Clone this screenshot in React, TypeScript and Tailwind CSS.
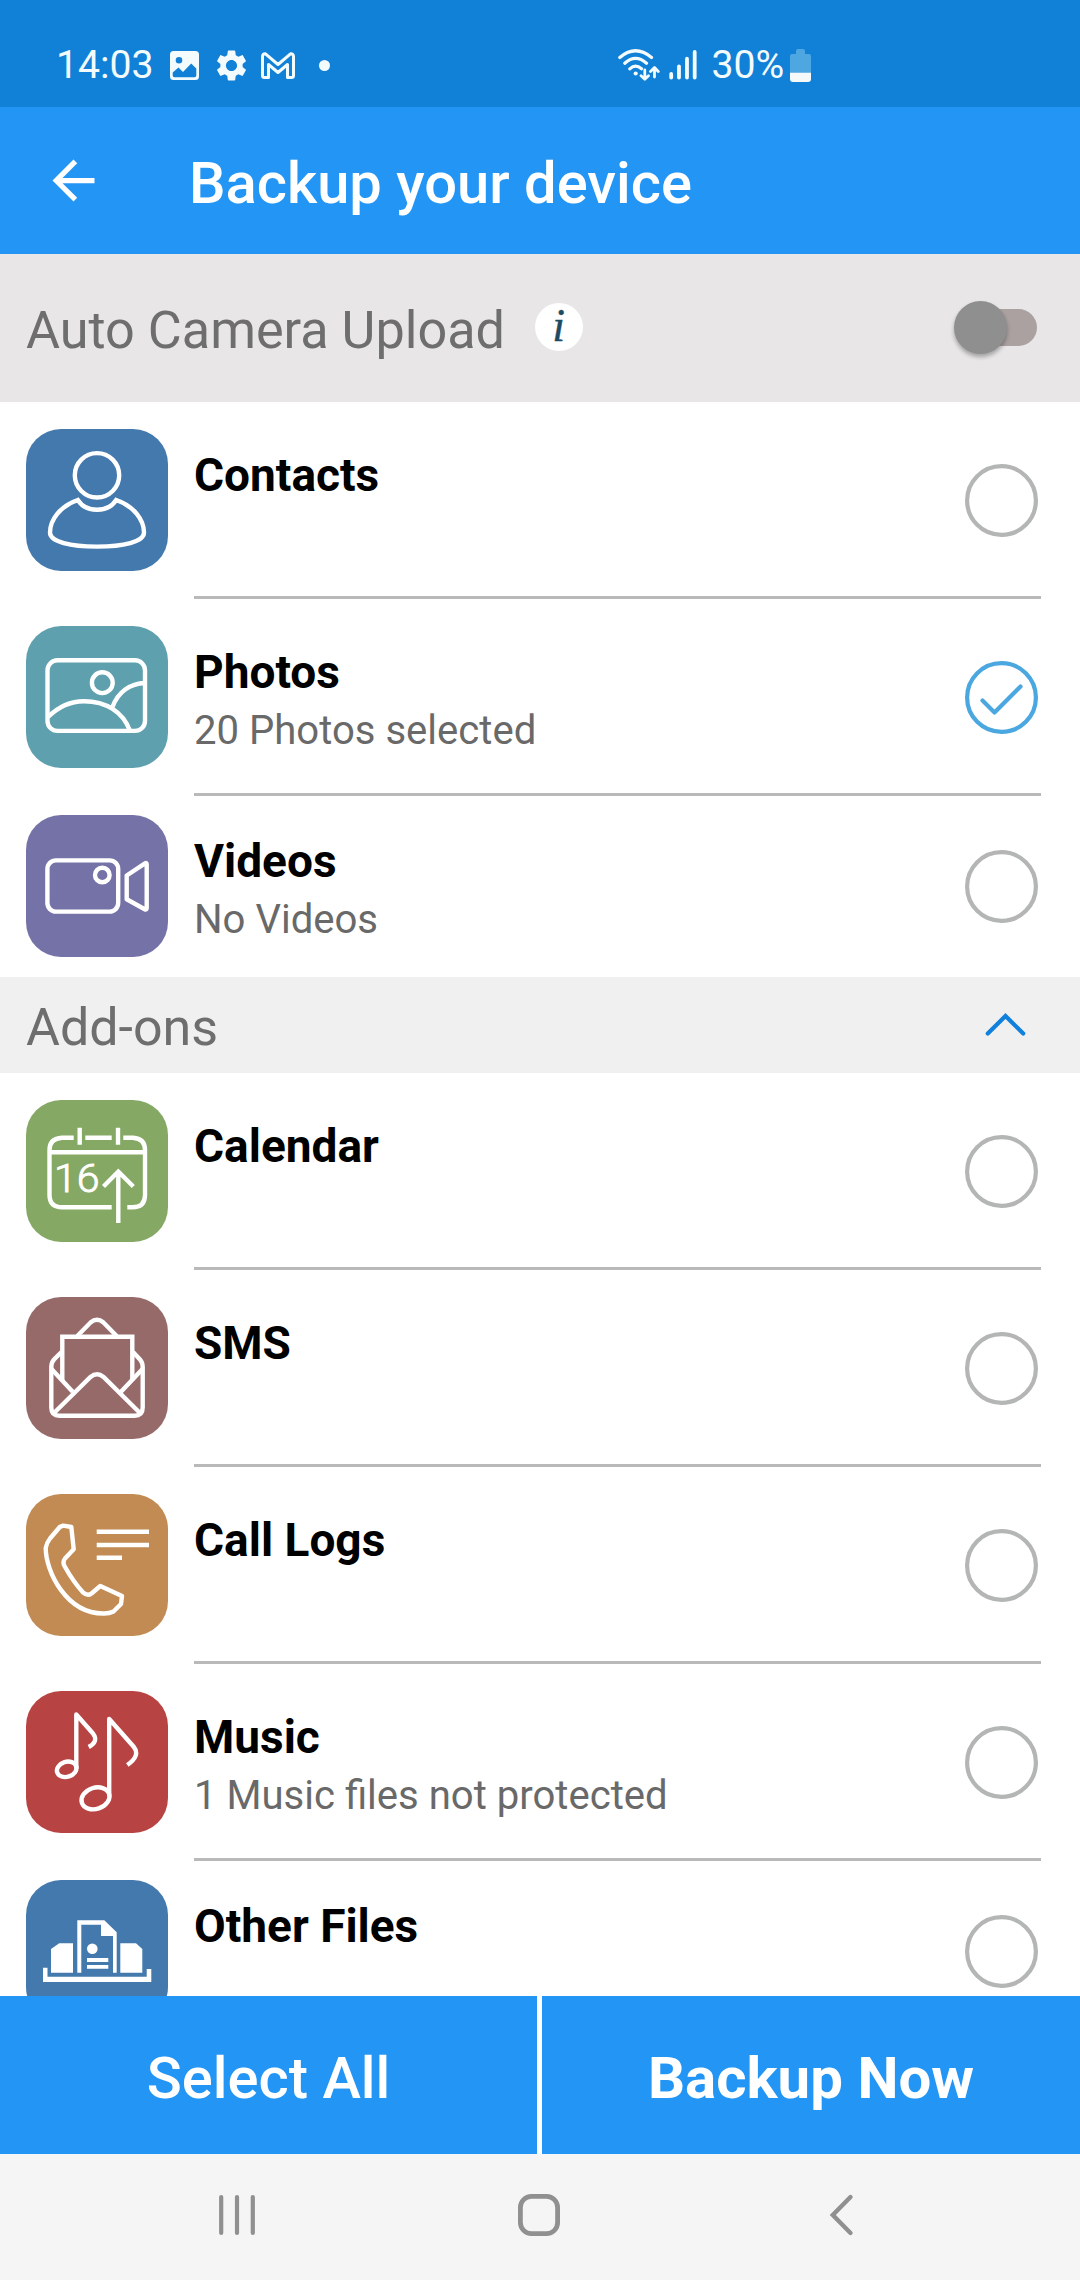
import { ReactNode } from "react";

const line = {
  fill: "none",
  stroke: "#fff",
  strokeWidth: 4.4,
} as const;

function ContactsArt() {
  return (
    <g {...line}>
      <circle cx="71" cy="46.3" r="22.2" />
      <path d="M51.8 71C34 77 24 91 24 103.500C24 113 45 117.600 71 117.600C97 117.600 118 113 118 103.500C118 91 108 77 90.200 71C86 77.500 79 80.800 71 80.800C63 80.800 56 77.500 51.800 71Z" />
    </g>
  );
}

function PhotosArt() {
  return (
    <g {...line}>
      <rect x="21.500" y="34.300" width="97.500" height="70.600" rx="10" />
      <circle cx="76.300" cy="56.700" r="10.400" />
      <path d="M22 91Q38 75.200 58 75.200C80 75.200 97 86 103.800 104.500" />
      <path d="M86.500 81C92 66 104 57.500 119 57" />
    </g>
  );
}

function VideosArt() {
  return (
    <g {...line}>
      <rect x="21.400" y="45.400" width="70.800" height="51.200" rx="8.500" />
      <circle cx="76.300" cy="60" r="7.300" />
      <path
        strokeLinejoin="round"
        d="M100.700 60.500L119 48.300Q120.700 47.300 120.700 49.300V93Q120.700 95.300 118.700 94.200L100.700 84.300Z"
      />
    </g>
  );
}

function CalendarArt() {
  return (
    <>
      <g {...line}>
        <path d="M47.700 37.700H36Q23.500 38.500 23.500 50V95Q23.500 107.300 36.500 107.300H85.700M59.300 37.700H85.700M97.300 37.700H107Q119 38.500 119 50V95Q119 107.300 106.500 107.300H101.300" />
        <path d="M53.700 27.700V44.800M92 27.700V44.800M23.500 52.300H119M92.300 72V123M77.500 86.500L92.300 71.500L107.300 86.500" />
      </g>
      <text
        x="28"
        y="92.300"
        fill="#fff"
        stroke="#fff"
        strokeWidth="0.900"
        fontSize="39.500"
        fontWeight="300"
        fontFamily="Roboto, sans-serif"
        textLength="45.500"
        lengthAdjust="spacingAndGlyphs"
      >
        16
      </text>
    </>
  );
}

function SmsArt() {
  return (
    <g {...line}>
      <path d="M36.300 83.500V39.700H106.300V83.500" />
      <path d="M51.300 39L64.500 25.500Q71 20 77.500 25.500L90.700 39" />
      <path d="M35.500 55L28 62.500Q25.300 65.500 25.300 70V110.500Q25.300 118.700 33.500 118.700H108.500Q116.700 118.700 116.700 110.500V70Q116.700 65.500 114 62.500L107 55" />
      <path d="M25.500 72L46.700 94.700M116.500 72L95 94.700" />
      <path d="M28 116L64.500 80Q71 74.500 77.500 80L114 116" />
    </g>
  );
}

function CallArt() {
  return (
    <g {...line} strokeLinejoin="round">
      <path d="M70.700 37.700H123M70.700 51H123M70.700 63.700H96" />
      <path d="M37.300 31.700L45.300 33L47.700 55.300L39 64.500Q36.300 68 38.500 72Q47 87.500 57.300 98.700Q61.500 102.500 65.500 99.500L74.300 92L96 102L95 110L87.500 117.500Q83 119.700 77.300 119.500C40 119.500 19.700 77 19.700 54Q20.500 49 24 44.500L34 32.800Z" />
    </g>
  );
}

function MusicArt() {
  return (
    <g {...line} strokeLinejoin="round">
      <path d="M50.300 77.500V23.500L67 42.500Q73 50.500 62.700 56" />
      <ellipse cx="40.700" cy="78.300" rx="10" ry="7.500" transform="rotate(-18 40.700 78.300)" />
      <path d="M83.200 105V28L107.500 55.500Q115 64.500 101.300 74" />
      <ellipse cx="69.500" cy="107.300" rx="14.300" ry="10.600" transform="rotate(-18 69.500 107.300)" />
    </g>
  );
}

function FilesArt() {
  return (
    <g fill="#fff">
      <path d="M17 87.700H21.500V96.700H120.700V89H125.300V102H17Z" />
      <path d="M25 69L33.300 63.300H47V92.700H25Z" />
      <path d="M94.300 63.300H110L116.300 69V92.700H94.300Z" />
      <path d="M51.300 92.700V40.300H78.300L90.700 52.300V92.700H87V56H75V44.700H55.300V92.700Z" />
      <circle cx="66.300" cy="68.700" r="5.300" />
      <path d="M61 78H82.300V82H61ZM61 85H82.300V88.700H61Z" />
    </g>
  );
}

type RowProps = {
  title: string;
  detail?: string;
  color: string;
  art: ReactNode;
  checked?: boolean;
  compact?: boolean;
  divider?: boolean;
};

function Row({ title, detail, color, art, checked, compact, divider = true }: RowProps) {
  return (
    <div className={`flex shrink-0 pl-[26px] pr-[39px] ${compact ? "h-[181px] pt-[19px]" : "h-[197px] pt-[27px]"}`}>
      <div className={`size-[142px] shrink-0 overflow-hidden rounded-[35px] ${color}`}>
        <svg viewBox="0 0 142 142" className="size-full">
          {art}
        </svg>
      </div>
      <div className={`ml-[26px] flex flex-1 justify-between ${divider ? "border-b-[3px] border-[#b9b9b9]" : ""}`}>
        <div className="pt-[24px]">
          <div className="text-[46px] font-bold leading-[45px] text-black">{title}</div>
          {detail && <div className="mt-[16px] text-[40.100px] leading-[40px] text-[#696969]">{detail}</div>}
        </div>
        <svg viewBox="0 0 73 73" className="mr-[3px] mt-[34.500px] size-[73px]" fill="none">
          <circle cx="36.500" cy="36.500" r="34.400" strokeWidth="4.200" stroke={checked ? "#4aa7e0" : "#b3b6b5"} />
          {checked && (
            <path d="M17.500 39.500L29.500 51.500L55.500 25.500" stroke="#4aa7e0" strokeWidth="4.200" strokeLinecap="round" strokeLinejoin="round" />
          )}
        </svg>
      </div>
    </div>
  );
}

function StatusBar() {
  return (
    <div className="flex h-[107px] shrink-0 items-start bg-[#1180d7] pt-[45px] text-[39.200px] leading-[40px] text-[#f3fbfd]">
      <span className="ml-[56px] w-[114px]">14:03</span>
      <svg viewBox="0 0 29 29" className="mt-[6px] size-[29px]">
        <path
          fill="#f3fbfd"
          fillRule="evenodd"
          d="M3.500 0H25.500Q29 0 29 3.500V25.500Q29 29 25.500 29H3.500Q0 29 0 25.500V3.500Q0 0 3.500 0ZM9 6A3.300 3.300 0 1 0 9 12.600A3.300 3.300 0 1 0 9 6ZM2.700 21.500V24.500Q2.700 26.300 4.500 26.300H24.500Q26.300 26.300 26.300 24.500V17.500L21.200 12.500L13 21L8.500 16.500Z"
        />
      </svg>
      <svg viewBox="2.200 2 19.600 20" className="ml-[17px] mt-[5px] h-[31px] w-[31px]" fill="#f3fbfd">
        <path d="M19.140 12.940c.04-.3.060-.61.060-.94 0-.32-.02-.64-.07-.94l2.030-1.580c.18-.14.23-.41.120-.61l-1.920-3.320c-.12-.22-.37-.29-.59-.22l-2.390.96c-.5-.38-1.030-.7-1.620-.94l-.36-2.540c-.04-.24-.24-.41-.48-.41h-3.840c-.24 0-.43.17-.47.41l-.36 2.540c-.59.24-1.130.57-1.620.94l-2.390-.96c-.22-.08-.47 0-.59.22L2.740 8.870c-.12.21-.08.47.120.61l2.030 1.580c-.05.3-.09.63-.09.94s.02.64.070.94l-2.030 1.580c-.18.14-.23.41-.12.61l1.920 3.320c.12.220.37.290.59.220l2.390-.96c.5.380 1.030.7 1.620.94l.36 2.540c.05.240.24.410.48.410h3.840c.24 0 .44-.17.470-.41l.36-2.540c.59-.24 1.130-.56 1.620-.94l2.390.96c.22.080.47 0 .59-.22l1.920-3.320c.12-.22.070-.47-.12-.61l-2.010-1.580zM12 15.600c-1.980 0-3.600-1.620-3.600-3.600s1.620-3.600 3.600-3.600 3.600 1.620 3.600 3.600-1.620 3.600-3.600 3.600z" />
      </svg>
      <svg viewBox="0 0 34 27" className="ml-[14px] mt-[6.500px] h-[27px] w-[34px]" fill="none" stroke="#f3fbfd" strokeWidth="3" strokeLinejoin="round">
        <path d="M1.500 23.500V4.500Q1.500 1.500 4.500 1.800L17 12.500L29.500 1.800Q32.500 1.500 32.500 4.500V23.500Q32.500 25.500 30.500 25.500H26.500V12.500L17 20.500L7.500 12.500V25.500H3.500Q1.500 25.500 1.500 23.500Z" />
      </svg>
      <span className="ml-[24px] mt-[15px] size-[10.500px] rounded-full bg-[#f3fbfd]" />
      <svg viewBox="0 0 42 32" className="ml-[288.500px] mt-[4px] h-[32px] w-[42px]" fill="none" stroke="#f3fbfd" strokeWidth="3.200" strokeLinecap="round" strokeLinejoin="round">
        <path d="M1.800 8.500Q17.500 -5 33.500 8.500M6.800 14.200Q17.500 4.500 28.500 14.200M11.800 19.800Q17.500 14.500 23.500 19.800" />
        <circle cx="17.700" cy="24.500" r="2.100" fill="#f3fbfd" stroke="none" />
        <path strokeWidth="2.800" d="M26.800 21V30M23 26.800L26.800 30.300L30.500 26.800M36.500 28V19.500M32.500 22.500L36.500 18.500L40.300 22.500" />
      </svg>
      <svg viewBox="0 0 28 30" className="ml-[9px] mt-[5px] h-[30px] w-[28px]" stroke="#f3fbfd" strokeWidth="3.800" strokeLinecap="round">
        <path d="M2.200 24V27.500M10 16.300V27.500M18 8.700V27.500M25.700 2V27.500" />
      </svg>
      <span className="ml-[14.500px] w-[78.500px]">30%</span>
      <svg viewBox="0 0 21 33" className="mt-[4px] h-[33px] w-[21px]">
        <path fill="#4ea7e0" d="M6 2Q6 0 8 0H13Q15 0 15 2V5H19Q21 5 21 7V24H0V7Q0 5 2 5H6Z" />
        <path fill="#f5f9fa" d="M0 23.700H21V30Q21 33 18 33H3Q0 33 0 30Z" />
      </svg>
    </div>
  );
}

export default function App() {
  return (
    <div className="flex h-[2280px] w-[1080px] flex-col overflow-hidden bg-white font-['Roboto',sans-serif]">
      <StatusBar />
      <header className="flex h-[147px] shrink-0 items-start bg-[#2395f4] text-white">
        <svg viewBox="0 0 24 24" className="ml-[42px] mt-[42px] size-[63px]" fill="#fff">
          <path d="M20 11H7.830l5.590-5.590L12 4l-8 8 8 8 1.410-1.410L7.830 13H20v-2z" />
        </svg>
        <h1 className="ml-[84px] mt-[48px] text-[57.900px] font-medium leading-[57px]">Backup your device</h1>
      </header>

      <section className="flex h-[148px] shrink-0 items-start bg-[#e8e6e7] pl-[26px] pr-[43px]">
        <span className="mt-[51px] text-[52.200px] leading-[52px] text-[#6e6e6e]">Auto Camera Upload</span>
        <span className="ml-[29.500px] mt-[49px] flex size-[48px] items-center justify-center rounded-full bg-white pb-[3px] font-['Liberation_Serif',serif] text-[46px] italic leading-none text-[#1f4a63] [-webkit-text-stroke:0.4px_#1f4a63]">
          i
        </span>
        <span className="relative ml-auto mt-[55px] h-[37px] w-[77px] rounded-full bg-[#aaa1a0]">
          <span className="absolute left-[-6px] top-[-8px] size-[53px] rounded-full bg-[#8f8f8f] shadow-[0_3px_4px_rgba(0,0,0,0.3)]" />
        </span>
      </section>

      <main className="flex min-h-0 flex-1 flex-col overflow-hidden">
        <Row title="Contacts" color="bg-[#4479ad]" art={<ContactsArt />} />
        <Row title="Photos" detail="20 Photos selected" color="bg-[#5ea0ae]" art={<PhotosArt />} checked />
        <Row title="Videos" detail="No Videos" color="bg-[#7472a6]" art={<VideosArt />} compact divider={false} />
        <section className="flex h-[96px] shrink-0 items-start justify-between bg-[#f0f0f0] pl-[26px] pr-[54px]">
          <span className="mt-[25px] text-[52px] leading-[52px] text-[#6e6e6e]">Add-ons</span>
          <svg viewBox="0 0 41 24" className="mt-[36px] h-[24px] w-[41px]" fill="none" stroke="#1180dc" strokeWidth="4.200" strokeLinecap="round">
            <path d="M2.800 20.500L20.500 3L38.200 20.500" />
          </svg>
        </section>
        <Row title="Calendar" color="bg-[#85a865]" art={<CalendarArt />} />
        <Row title="SMS" color="bg-[#966a69]" art={<SmsArt />} />
        <Row title="Call Logs" color="bg-[#c18b53]" art={<CallArt />} />
        <Row title="Music" detail="1 Music files not protected" color="bg-[#b74443]" art={<MusicArt />} />
        <Row title="Other Files" color="bg-[#4479ad]" art={<FilesArt />} compact divider={false} />
      </main>

      <div className="flex h-[158px] shrink-0 gap-[5px] bg-white text-white">
        <button className="flex w-[537px] justify-center bg-[#2395f4] pt-[54px] text-[57.900px] font-medium leading-[57px]">Select All</button>
        <button className="flex flex-1 justify-center bg-[#2395f4] pt-[54px] text-[58.200px] font-bold leading-[57px]">Backup Now</button>
      </div>

      <nav className="flex h-[126px] shrink-0 items-start bg-[#f5f5f5] pt-[39px]">
        <svg viewBox="0 0 38 44" className="ml-[218px] h-[44px] w-[38px]" stroke="#909090" strokeWidth="4.200" strokeLinecap="round">
          <path d="M3.200 4V40M19 4V40M34.800 4V40" />
        </svg>
        <svg viewBox="0 0 44 44" className="ml-[261px] size-[44px]" fill="none" stroke="#909090" strokeWidth="4.800">
          <rect x="3.400" y="3.400" width="37.200" height="37.200" rx="11" />
        </svg>
        <svg viewBox="0 0 26 44" className="ml-[268px] h-[44px] w-[26px]" fill="none" stroke="#909090" strokeWidth="4.400" strokeLinecap="round" strokeLinejoin="miter">
          <path d="M21.500 4L3.800 22L21.500 40" />
        </svg>
      </nav>
    </div>
  );
}
